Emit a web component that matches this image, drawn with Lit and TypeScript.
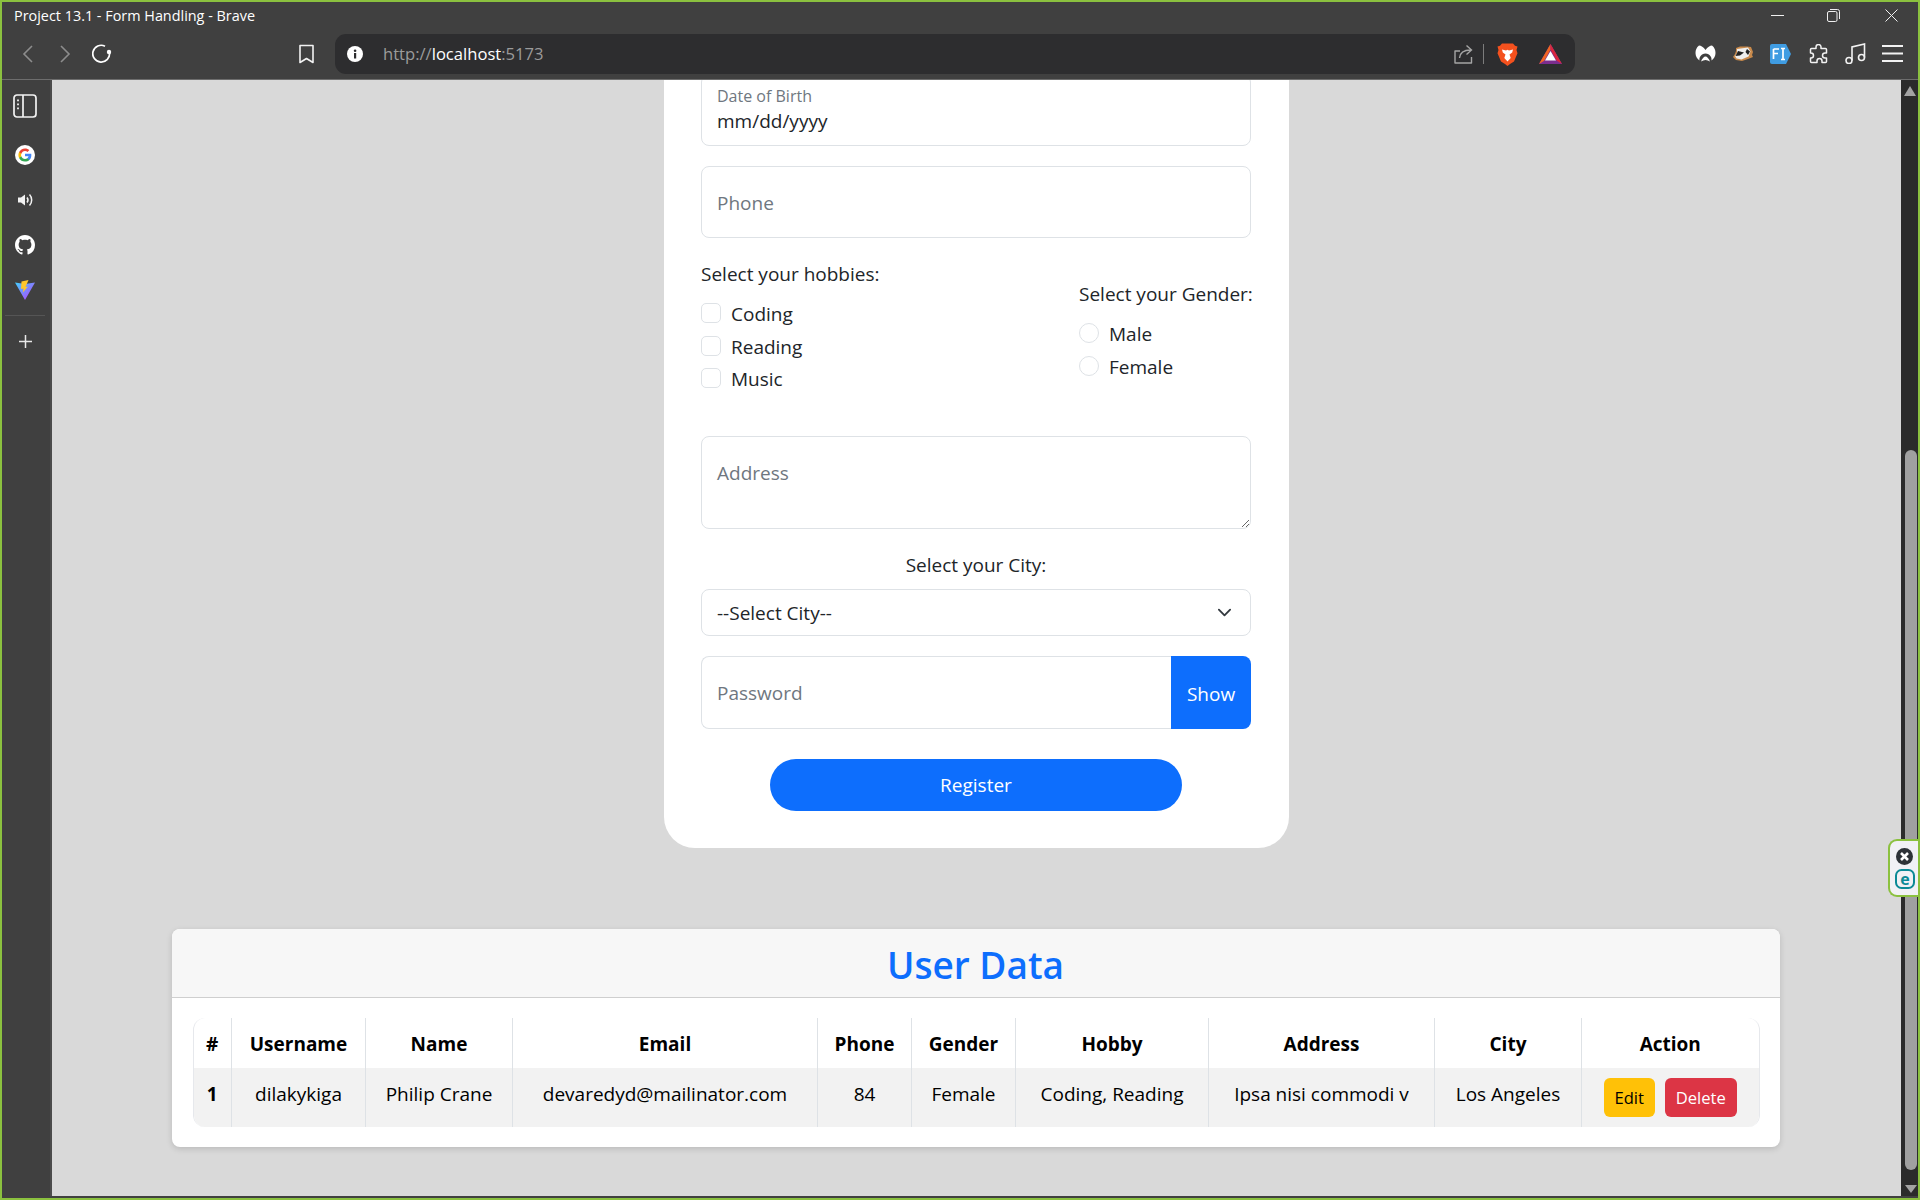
import { LitElement, html, css } from 'lit';
import { customElement } from 'lit/decorators.js';

const ARROW =
  "url(\"data:image/svg+xml,%3csvg xmlns='http://www.w3.org/2000/svg' viewBox='0 0 16 16'%3e%3cpath fill='none' stroke='%23343a40' stroke-linecap='round' stroke-linejoin='round' stroke-width='2' d='m2 5 6 6 6-6'/%3e%3c/svg%3e\")";

const USERS = [
  {
    username: 'dilakykiga',
    name: 'Philip Crane',
    email: 'devaredyd@mailinator.com',
    phone: '84',
    gender: 'Female',
    hobby: 'Coding, Reading',
    address: 'Ipsa nisi commodi v',
    city: 'Los Angeles',
  },
];

@customElement('app-root')
export class AppRoot extends LitElement {
  static styles = css`
    :host {
      display: block;
      width: 1920px;
      height: 1200px;
      box-sizing: border-box;
      border: 2px solid #8bc13f;
      background: #404040;
      font-family: 'Open Sans', 'Liberation Sans', sans-serif;
      overflow: hidden;
      position: relative;
      --body-fs: 19px;
    }

    /* browser chrome */
    .titlebar {
      height: 26px;
      display: flex;
      align-items: center;
      color: #fff;
      font-size: 14.4px;
      padding-left: 12px;
    }
    .winctl {
      margin-left: auto;
      display: flex;
      align-items: center;
    }
    .winctl svg { display: block; fill: none; stroke: #f0f0f0; stroke-width: 1; }
    .min { margin-right: 43px; }
    .restore { margin-right: 45px; }
    .close { margin-right: 20px; }

    .toolbar {
      height: 51px;
      box-sizing: content-box;
      border-bottom: 1px solid #6d6d6d;
      display: flex;
      align-items: center;
    }
    .toolbar svg { display: block; flex: none; }
    .back { margin-left: 20px; }
    .forward { margin-left: 27px; }
    .reload { margin-left: 21px; }
    .bookmark { margin-left: 187px; }
    .address {
      margin-left: 21px;
      width: 1240px;
      height: 40px;
      border-radius: 11px;
      background: #2d2d2f;
      display: flex;
      align-items: center;
      padding-left: 12px;
      box-sizing: border-box;
      margin-top: 1px;
    }
    .url {
      margin-left: 20px;
      font-size: 16.6px;
      color: #9b9b9b;
      margin-top: -2px;
    }
    .url b { font-weight: 400; color: #fff; }
    .share { margin-left: auto; }
    .sep {
      width: 1px;
      height: 20px;
      background: #7c7c7c;
      margin-left: 10px;
    }
    .lion { margin-left: 13px; }
    .bat { margin-left: 21px; margin-right: 13px; }
    .mb { margin-left: 120px; }
    .badger { margin-left: 16px; }
    .fi { margin-left: 16px; }
    .puzzle { margin-left: 17px; }
    .music { margin-left: 16px; }
    .menu { margin-left: 15px; }

    .content {
      display: flex;
      height: 1116px;
    }
    .sidebar {
      width: 50px;
      flex: none;
      box-sizing: border-box;
      border-right: 2px solid #4c4c4c;
      display: flex;
      flex-direction: column;
      align-items: center;
      padding: 14px 2px 0 0;
    }
    .sidebar svg { display: block; flex: none; }
    .sb-google { margin-top: 27px; }
    .sb-sound { margin-top: 28px; }
    .sb-github { margin-top: 28px; }
    .sb-vite { margin-top: 25px; }
    .sb-line {
      width: 40px;
      height: 1px;
      background: #555;
      margin-top: 15px;
    }
    .sb-plus { margin-top: 19px; }

    .scrollbar {
      width: 17px;
      flex: none;
      background: #2b2b2b;
      position: relative;
    }
    .arrow-up {
      position: absolute;
      left: 3px;
      top: 6px;
      border-left: 6.5px solid transparent;
      border-right: 6.5px solid transparent;
      border-bottom: 10px solid #a3a3a3;
    }
    .arrow-down {
      position: absolute;
      left: 4px;
      top: 1105px;
      border-left: 6px solid transparent;
      border-right: 6px solid transparent;
      border-top: 8px solid #a3a3a3;
    }
    .thumb {
      position: absolute;
      left: 4px;
      right: 1px;
      top: 370px;
      height: 720px;
      border-radius: 6px;
      background: #a0a0a0;
    }

    .eset {
      position: absolute;
      right: 0;
      top: 837px;
      width: 30px;
      height: 58px;
      box-sizing: border-box;
      border: 2px solid #8bc13f;
      border-right: none;
      border-radius: 9px 0 0 9px;
      background: #f1f1f5;
      display: flex;
      flex-direction: column;
      align-items: center;
      padding: 7px 0 0 1px;
      gap: 4px;
    }

    /* page */
    main {
      flex: 1;
      min-width: 0;
      background: #d9d9d9;
      overflow: hidden;
      display: flex;
      flex-direction: column;
      align-items: center;
      color: #212529;
      font-size: var(--body-fs);
      line-height: 30px;
    }

    .form-card {
      width: 625px;
      box-sizing: border-box;
      margin-top: -6px;
      padding: 0 38px 37px 37px;
      background: #fff;
      border-radius: 0 0 31px 31px;
    }
    .field {
      display: block;
      width: 100%;
      box-sizing: border-box;
      height: 72px;
      border: 1px solid #dee2e6;
      border-radius: 8px;
      background: #fff;
      padding: 0 15px;
      font: inherit;
      color: #212529;
      margin: 0;
      outline: none;
    }
    input.field { padding-top: 2px; }
    .field::placeholder { color: #6f7780; opacity: 1; }
    .date {
      padding-top: 9px;
      margin-bottom: 20px;
    }
    .date small {
      display: block;
      font-size: 16px;
      line-height: 24px;
      color: #6f7780;
    }
    .date span { display: block; line-height: 26px; }
    .choices {
      display: flex;
      justify-content: space-between;
      margin-top: 21px;
    }
    .gender { margin-top: 20px; width: 172px; white-space: nowrap; }
    .group-label { margin-bottom: 10px; }
    .check {
      display: flex;
      align-items: flex-start;
      gap: 10px;
      height: 32.5px;
    }
    .check input {
      appearance: none;
      width: 20px;
      height: 20px;
      margin: 4px 0 0;
      border: 1px solid #dee2e6;
      background: #fff;
      border-radius: 5px;
    }
    .check input[type='radio'] { border-radius: 50%; }
    textarea.field {
      height: 93px;
      margin-top: 39px;
      padding-top: 21px;
      line-height: 30px;
      resize: vertical;
    }
    .city-label {
      text-align: center;
      margin: 21px 0 9px;
    }
    select.field {
      height: 47px;
      appearance: none;
      padding: 2px 15px 0;
      background-image: ${css([ARROW] as unknown as TemplateStringsArray)};
      background-repeat: no-repeat;
      background-position: right 18px center;
      background-size: 15px 15px;
    }
    .pass {
      display: flex;
      margin-top: 20px;
      height: 73px;
    }
    .pass .field {
      height: 73px;
      flex: 1;
      min-width: 0;
      border-right: none;
      border-radius: 8px 0 0 8px;
    }
    .pass button {
      width: 80px;
      flex: none;
      border: none;
      background: #0d6efd;
      color: #fff;
      font: inherit;
      padding: 3px 0 0;
      border-radius: 0 8px 8px 0;
    }
    .register {
      display: block;
      width: 412px;
      height: 52px;
      margin: 30px auto 0;
      padding: 1px 0 0;
      border: none;
      border-radius: 26px;
      background: #0d6efd;
      color: #fff;
      font: inherit;
    }

    .data-card {
      width: 1608px;
      box-sizing: border-box;
      margin: 81px 2px 0 0;
      background: #fff;
      border-radius: 8px;
      box-shadow: 0 2px 6px rgba(0, 0, 0, 0.14);
      overflow: hidden;
      flex: none;
    }
    .data-card header {
      height: 69px;
      box-sizing: border-box;
      background: #f7f7f7;
      border-bottom: 1px solid #cfcfcf;
      text-align: center;
    }
    .data-card h2 {
      margin: 0;
      font-size: 37px;
      font-weight: 600;
      line-height: 72px;
      color: #0d6efd;
    }
    .table-wrap {
      margin: 20px 20px 20px 21px;
      border-radius: 12px;
      overflow: hidden;
      border: solid #e6e8ec;
      border-width: 0 1px;
    }
    table {
      width: 100%;
      table-layout: fixed;
      border-collapse: collapse;
      color: #000;
    }
    th, td {
      padding: 0;
      text-align: center;
      font-weight: 400;
      border-right: 1px solid #dee2e6;
    }
    th:last-child, td:last-child { border-right: none; }
    thead th { height: 50px; font-weight: 700; padding-top: 2px; box-sizing: border-box; }
    tbody th, tbody td {
      height: 59px;
      background: #f2f2f2;
      vertical-align: top;
      padding-top: 11px;
      box-sizing: border-box;
    }
    tbody th { font-weight: 700; }
    tbody td.actions { padding-top: 10px; }
    .c1 { width: 38px; }
    .c2 { width: 134px; }
    .c3 { width: 147px; }
    .c4 { width: 305px; }
    .c5 { width: 94px; }
    .c6 { width: 104px; }
    .c7 { width: 193px; }
    .c8 { width: 226px; }
    .c9 { width: 147px; }
    .btns {
      display: flex;
      justify-content: center;
      gap: 10px;
    }
    .btns button {
      height: 39px;
      border: none;
      border-radius: 6px;
      font: inherit;
      font-size: 16.6px;
      line-height: 39px;
      padding: 0;
    }
    .edit { width: 51px; background: #ffc107; color: #000; }
    .del { width: 72px; background: #dc3545; color: #fff; }
  `;

  render() {
    return html`
      <div class="titlebar">
        Project 13.1 - Form Handling - Brave
        <div class="winctl">
          <svg class="min" width="13" height="13" viewBox="0 0 13 13"><path d="M0 6.5h13" /></svg>
          <svg class="restore" width="13" height="14" viewBox="0 0 13 14">
            <rect x=".5" y="3.5" width="9.5" height="10" rx="1.5" />
            <path d="M3 1.5h7.5a2 2 0 0 1 2 2V11" />
          </svg>
          <svg class="close" width="13" height="13" viewBox="0 0 13 13"><path d="M.5.5l12 12M12.5.5l-12 12" /></svg>
        </div>
      </div>

      <div class="toolbar">
        <svg class="back" width="11" height="18" viewBox="0 0 11 18"><path d="M10 1 2 9l8 8" fill="none" stroke="#8d8d8d" stroke-width="1.6" /></svg>
        <svg class="forward" width="11" height="18" viewBox="0 0 11 18"><path d="M1 1l8 8-8 8" fill="none" stroke="#8d8d8d" stroke-width="1.6" /></svg>
        <svg class="reload" width="20" height="20" viewBox="0 0 20 20">
          <path d="M17.5 8.5A8.4 8.4 0 1 1 13 2.2" fill="none" stroke="#fff" stroke-width="1.7" />
          <circle cx="17" cy="8" r="2.2" fill="#fff" />
        </svg>
        <svg class="bookmark" width="15" height="20" viewBox="0 0 15 20"><path d="M1 1.5h13v17l-6.500-4-6.500 4z" fill="none" stroke="#f2f2f2" stroke-width="1.6" stroke-linejoin="round" /></svg>
        <div class="address">
          <svg width="16" height="16" viewBox="0 0 16 16">
            <circle cx="8" cy="8" r="8" fill="#fff" />
            <rect x="7" y="7" width="2.200" height="5.500" fill="#2d2d2f" />
            <circle cx="8.100" cy="4.700" r="1.300" fill="#2d2d2f" />
          </svg>
          <div class="url">http://<b>localhost</b>:5173</div>
          <svg class="share" width="19" height="20" viewBox="0 0 19 20">
            <path d="M6 7H1v12h16.500v-6" fill="none" stroke="#a5a5a5" stroke-width="1.400" stroke-linejoin="round" />
            <path d="M5.500 14c.5-5 4-8 11-8M12.500 1.500l5 4.500-5 4.500" fill="none" stroke="#a5a5a5" stroke-width="1.400" />
          </svg>
          <div class="sep"></div>
          <svg class="lion" width="21" height="23" viewBox="0 0 21 23">
            <path d="M5 .5h11l2 2.200 2.500.8-1 3.500 1 3.200-3.500 8.300-4 2.500-2.500 2-2.500-2-4-2.500L.5 10.200l1-3.200-1-3.500L3 2.700z" fill="#f4511e" />
            <path d="M5 6.500l4 1 1.500-.7 1.500.7 4-1-.8 3-2.700 2 1.200 3.500-3.200 3.500-3.200-3.500 1.200-3.500-2.700-2z" fill="#fff" />
          </svg>
          <svg class="bat" width="23" height="20" viewBox="0 0 23 20">
            <path d="M11.500 0 23 20H0z" fill="#7b2d8e" />
            <path d="M11.500 0 0 20l5.200-3.200L11.500 5.500z" fill="#f26522" />
            <path d="M11.500 0v5.500l6.300 11.300L23 20z" fill="#d9263e" />
            <path d="M11.500 7 17 16.500H6z" fill="#fff" />
          </svg>
        </div>
        <svg class="mb" width="21" height="17" viewBox="0 0 21 17">
          <path d="M10.500 5C12.500 2 15 .5 17 .5 19.500 2.500 20.500 5 20.500 8 20.500 11 19 13.500 16.500 15.500 17 12 15 9 10.500 8.500 6 9 4 12 4.500 15.500 2 13.500.5 11 .5 8 .5 5 1.500 2.500 4 .5 6 .5 8.500 2 10.500 5z" fill="#fff" />
          <path d="M6 16.500c1-3 3-5 4.500-5s3.500 2 4.500 5c-1.500-1-3-1.500-4.500-1.500s-3 .5-4.500 1.500z" fill="#fff" />
        </svg>
        <svg class="badger" width="22" height="16" viewBox="0 0 22 16">
          <path d="M4 2 8 .5h7L19 1l2 5-1 3 1 2-5 2-6 2-6-1-3-3 2-3 1-3z" fill="#c98a4b" />
          <path d="M5 3l11-1.500 2.500 4-2 5-7 3-5-1-1.500-2.500 2-3z" fill="#eee" />
          <path d="M6 5l6 1.500L8 9.500 3.500 10zM15 3l3 2.500-2 3.500-2.500-3z" fill="#222" />
        </svg>
        <svg class="fi" width="21" height="20" viewBox="0 0 21 20">
          <path d="M2 0h14l5 10-5 10H2a2 2 0 0 1-2-2V2a2 2 0 0 1 2-2z" fill="#3f9ce2" />
          <path d="M3.500 5h5.500M3.500 5v10M3.500 9.500h4.500M11 4.500h4M11 15.500h4M13 4.500v11" fill="none" stroke="#fff" stroke-width="1.700" />
        </svg>
        <svg class="puzzle" width="21" height="20" viewBox="0 0 21 20">
          <path d="M8 4.500V3a2.500 2.500 0 0 1 5 0v1.500h4.500a1 1 0 0 1 1 1V9H17a2.500 2.500 0 0 0 0 5h1.500v3.500a1 1 0 0 1-1 1h-3.500V17a2.500 2.500 0 0 0-5 0v1.500H3.500a1 1 0 0 1-1-1V14H3a2.500 2.500 0 0 0 0-5h-.5V5.500a1 1 0 0 1 1-1z" fill="none" stroke="#f2f2f2" stroke-width="1.500" stroke-linejoin="round" />
        </svg>
        <svg class="music" width="22" height="21" viewBox="0 0 22 21">
          <circle cx="4" cy="17.500" r="3" fill="none" stroke="#f2f2f2" stroke-width="1.600" />
          <circle cx="16.500" cy="14.500" r="3" fill="none" stroke="#f2f2f2" stroke-width="1.600" />
          <path d="M7 17.500V4l12.500-3v13.500" fill="none" stroke="#f2f2f2" stroke-width="1.600" />
        </svg>
        <svg class="menu" width="21" height="17" viewBox="0 0 21 17"><path d="M0 1h21M0 8.500h21M0 16h21" stroke="#f2f2f2" stroke-width="1.800" /></svg>
      </div>

      <div class="content">
        <aside class="sidebar">
          <svg width="24" height="24" viewBox="0 0 24 24">
            <rect x="1" y="1" width="22" height="22" rx="3" fill="none" stroke="#f2f2f2" stroke-width="1.700" />
            <path d="M10 1v22" stroke="#f2f2f2" stroke-width="1.700" />
            <path d="M5 5.500v1.800M5 9.500v1.800M5 13.500v1.800" stroke="#f2f2f2" stroke-width="1.800" />
          </svg>
          <svg class="sb-google" width="20" height="20" viewBox="0 0 20 20">
            <circle cx="10" cy="10" r="10" fill="#fff" />
            <g transform="translate(2.800 2.800) scale(.6)">
              <path d="M22.560 12.250c0-.78-.07-1.530-.2-2.250H12v4.260h5.920c-.26 1.370-1.040 2.530-2.210 3.310v2.770h3.570c2.080-1.920 3.280-4.740 3.280-8.090z" fill="#4285f4" />
              <path d="M12 23c2.970 0 5.460-.98 7.280-2.660l-3.570-2.770c-.98.66-2.230 1.060-3.710 1.060-2.860 0-5.290-1.930-6.160-4.530H2.180v2.840C3.990 20.530 7.700 23 12 23z" fill="#34a853" />
              <path d="M5.840 14.090c-.22-.66-.35-1.360-.35-2.090s.13-1.430.35-2.090V7.070H2.180C1.430 8.550 1 10.220 1 12s.43 3.450 1.180 4.930l2.850-2.220.81-.62z" fill="#fbbc05" />
              <path d="M12 5.380c1.620 0 3.060.56 4.210 1.640l3.150-3.150C17.450 2.090 14.970 1 12 1 7.700 1 3.990 3.470 2.180 7.070l3.660 2.840c.87-2.600 3.300-4.530 6.160-4.530z" fill="#ea4335" />
            </g>
          </svg>
          <svg class="sb-sound" width="15" height="14" viewBox="0 0 15 14">
            <path d="M0 4.500h3L7 1.500v11l-4-3H0z" fill="#f2f2f2" />
            <path d="M9 4.500a4 4 0 0 1 0 5M11.500 1.500a8 8 0 0 1 0 11" fill="none" stroke="#f2f2f2" stroke-width="1.500" />
          </svg>
          <svg class="sb-github" width="20" height="20" viewBox="0 0 16 16">
            <path fill="#fff" d="M8 0C3.580 0 0 3.580 0 8c0 3.540 2.290 6.530 5.470 7.590.4.07.55-.17.55-.38 0-.19-.01-.82-.01-1.490-2.010.37-2.530-.49-2.690-.94-.09-.23-.48-.94-.82-1.130-.28-.15-.68-.52-.01-.53.63-.01 1.080.58 1.230.82.72 1.210 1.870.87 2.330.66.07-.52.28-.87.51-1.070-1.780-.2-3.640-.89-3.640-3.950 0-.87.31-1.590.82-2.150-.08-.2-.36-1.020.08-2.120 0 0 .67-.21 2.200.82.64-.18 1.320-.27 2-.27.68 0 1.360.09 2 .27 1.530-1.040 2.200-.82 2.200-.82.44 1.100.16 1.920.08 2.120.51.56.82 1.270.82 2.150 0 3.070-1.870 3.750-3.650 3.950.29.25.54.73.54 1.480 0 1.070-.01 1.930-.01 2.200 0 .21.15.46.55.38A8.013 8.013 0 0016 8c0-4.420-3.580-8-8-8z" />
          </svg>
          <svg class="sb-vite" width="20" height="20" viewBox="0 0 20 20">
            <defs>
              <linearGradient id="vg" x1="0" y1="0" x2="1" y2="1">
                <stop offset="0" stop-color="#41d1ff" />
                <stop offset="1" stop-color="#bd34fe" />
              </linearGradient>
            </defs>
            <path d="M0 2.500 10 4l10-1.500L10 20z" fill="url(#vg)" />
            <path d="M13.500 0 6.500 1.500 6 9l2.500-.5-.7 4L13 6.500l-2.500.5z" fill="#ffc62a" />
          </svg>
          <div class="sb-line"></div>
          <svg class="sb-plus" width="13" height="13" viewBox="0 0 13 13"><path d="M6.500 0v13M0 6.500h13" stroke="#e8e8e8" stroke-width="1.500" /></svg>
        </aside>

        <main>
          <form class="form-card">
            <div class="field date">
              <small>Date of Birth</small>
              <span>mm/dd/yyyy</span>
            </div>
            <input class="field" placeholder="Phone" />

            <div class="choices">
              <div>
                <div class="group-label">Select your hobbies:</div>
                ${['Coding', 'Reading', 'Music'].map(
                  (h) => html`<label class="check"><input type="checkbox" />${h}</label>`
                )}
              </div>
              <div class="gender">
                <div class="group-label">Select your Gender:</div>
                ${['Male', 'Female'].map(
                  (g) => html`<label class="check"><input type="radio" name="gender" />${g}</label>`
                )}
              </div>
            </div>

            <textarea class="field" placeholder="Address"></textarea>

            <div class="city-label">Select your City:</div>
            <select class="field">
              <option>--Select City--</option>
            </select>

            <div class="pass">
              <input class="field" placeholder="Password" />
              <button type="button">Show</button>
            </div>

            <button class="register" type="button">Register</button>
          </form>

          <section class="data-card">
            <header><h2>User Data</h2></header>
            <div class="table-wrap">
              <table>
                <thead>
                  <tr>
                    <th class="c1">#</th>
                    <th class="c2">Username</th>
                    <th class="c3">Name</th>
                    <th class="c4">Email</th>
                    <th class="c5">Phone</th>
                    <th class="c6">Gender</th>
                    <th class="c7">Hobby</th>
                    <th class="c8">Address</th>
                    <th class="c9">City</th>
                    <th>Action</th>
                  </tr>
                </thead>
                <tbody>
                  ${USERS.map(
                    (u, i) => html`
                      <tr>
                        <th>${i + 1}</th>
                        <td>${u.username}</td>
                        <td>${u.name}</td>
                        <td>${u.email}</td>
                        <td>${u.phone}</td>
                        <td>${u.gender}</td>
                        <td>${u.hobby}</td>
                        <td>${u.address}</td>
                        <td>${u.city}</td>
                        <td class="actions">
                          <div class="btns">
                            <button class="edit">Edit</button>
                            <button class="del">Delete</button>
                          </div>
                        </td>
                      </tr>
                    `
                  )}
                </tbody>
              </table>
            </div>
          </section>
        </main>

        <div class="scrollbar">
          <div class="arrow-up"></div>
          <div class="thumb"></div>
          <div class="arrow-down"></div>
        </div>
      </div>

      <div class="eset">
        <svg width="17" height="17" viewBox="0 0 17 17">
          <circle cx="8.500" cy="8.500" r="8.500" fill="#2d3237" />
          <path d="M5 5l7 7M12 5l-7 7" stroke="#fff" stroke-width="2.600" />
        </svg>
        <svg width="20" height="20" viewBox="0 0 20 20">
          <rect x="1" y="1" width="18" height="18" rx="5.500" fill="none" stroke="#0b8a96" stroke-width="2" />
          <text x="10" y="15.500" text-anchor="middle" font-size="16" font-weight="700" fill="#0b8a96" font-family="Open Sans, sans-serif">e</text>
        </svg>
      </div>
    `;
  }
}
